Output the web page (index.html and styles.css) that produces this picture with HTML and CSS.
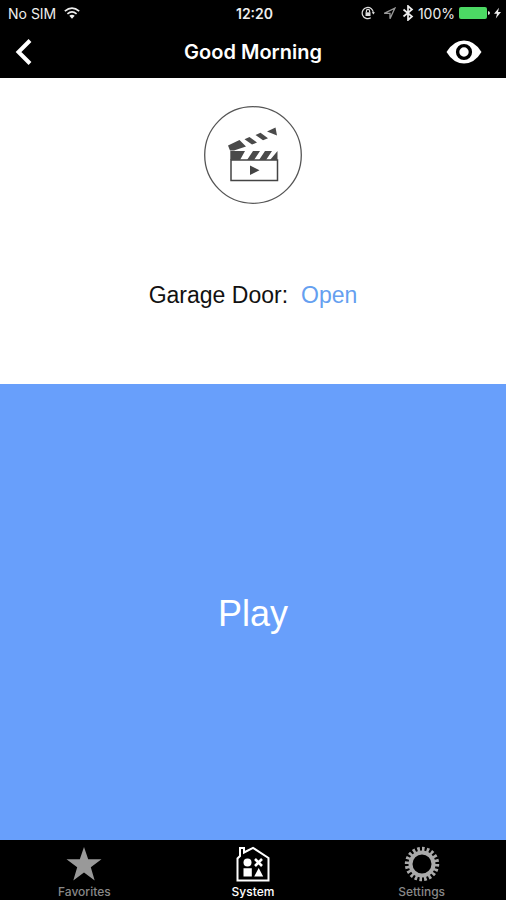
FILE: index.html
```html
<!DOCTYPE html>
<html lang="en">
<head>
<meta charset="utf-8">
<meta name="viewport" content="width=device-width, initial-scale=1">
<title>Good Morning</title>
<link rel="stylesheet" href="styles.css">
</head>
<body>
<div class="status">
  <div class="status-side">
    <span>No SIM</span>
    <svg class="wifi" width="16" height="12" viewBox="0 0 16 12" fill="none" stroke="#eee" stroke-width="1.7" aria-hidden="true">
      <path d="M.8 4.1Q8-2 15.2 4.1M3.4 6.8q4.6-3.8 9.2 0"/>
      <path d="M5.3 8.8Q8 6.8 10.7 8.8L8 11.8z" fill="#eee" stroke="none"/>
    </svg>
  </div>
  <span class="clock">12:20</span>
  <div class="status-side status-end">
    <svg width="14" height="14" viewBox="0 0 14 14" fill="none" stroke="#ddd" stroke-width="1.2" aria-hidden="true">
      <path d="M9.8 11.8A5.6 5.6 0 1 1 12.4 7"/>
      <path d="M10.8 6.2h3.2l-1.6 2.2z" fill="#ddd" stroke="none"/>
      <path d="M5.4 6.5V5a1.6 1.6 0 0 1 3.2 0v1.5"/>
      <path d="M4.5 6.3h5V10h-5z" fill="#ddd" stroke="none"/>
    </svg>
    <svg class="location" width="13" height="13" viewBox="0 0 13 13" fill="none" stroke="#999" stroke-width="1.3" aria-hidden="true">
      <path d="M1.2 6.4 11.8 1.2 7 11.8V6.4z"/>
    </svg>
    <svg width="12" height="16" viewBox="0 0 12 16" fill="none" stroke="#eee" stroke-width="1.7" aria-hidden="true">
      <path d="M1.5 4.5 10 11.5 6 15V1l4 3.5-8.5 7"/>
    </svg>
    <span>100%</span>
    <svg width="31" height="12" viewBox="0 0 31 12" aria-hidden="true">
      <rect width="28" height="12" rx="2" fill="#4cd964"/>
      <path d="M29 4q2 .4 2 2t-2 2z" fill="#ddd"/>
    </svg>
    <svg width="7" height="12" viewBox="0 0 7 12" fill="#eee" aria-hidden="true">
      <path d="M5 .8 0 6.8h3L1.8 11.4 7 5H4z"/>
    </svg>
  </div>
</div>
<header class="nav">
  <button class="icon-button" aria-label="Back">
    <svg width="20" height="28" viewBox="0 0 20 28" fill="none" stroke="#fff" stroke-width="4" aria-hidden="true">
      <path d="M16 2.5 4.5 14 16 25.5"/>
    </svg>
  </button>
  <h1 class="title">Good Morning</h1>
  <button class="icon-button" aria-label="View">
    <svg width="36" height="24" viewBox="0 0 36 24" aria-hidden="true">
      <path d="M.5 12Q7.5.5 18 .5T35.5 12Q28.5 23.5 18 23.5T.5 12z" fill="#fff"/>
      <circle cx="18" cy="12" r="6.4" fill="#fff" stroke="#000" stroke-width="3.4"/>
    </svg>
  </button>
</header>
<main class="scene">
  <section class="details">
    <svg width="98" height="98" viewBox="0 0 98 98" aria-hidden="true">
      <circle cx="49" cy="49" r="48.3" fill="none" stroke="#555" stroke-width="1.3"/>
      <path d="M27 54V74.5H73.5V54z" fill="none" stroke="#444" stroke-width="1.5"/>
      <path d="M46 59.5v9.5l9.5-4.7z" fill="#444"/>
      <g fill="#4a4a4a">
        <path d="M26.3 45H41L36 54H26.3zM49 45h7l-6 9h-7zM61 45h7l-6 9h-7zM73.5 45v9H66z"/>
        <path d="M24 39.5 35.5 34 42 40.5 30 44.5H26zM40.5 33.2 45.5 31 53 36.5 48 38.5zM51.5 29 56.5 26.8 64 32.2 59 34.3zM63 25.5 71.5 21.5 73 29.5z"/>
      </g>
    </svg>
    <p class="device"><span>Garage Door:</span><span class="value">Open</span></p>
  </section>
  <button class="play">Play</button>
</main>
<nav class="tabs">
  <a class="tab" href="#favorites">
    <svg width="36" height="36" viewBox="0 0 36 36" fill="#999" aria-hidden="true">
      <path d="M18 1 22.2 13.3H35.5L24.8 21.2 28.7 34.5 18 26.5 7.3 34.5 11.2 21.2.5 13.3H13.8z"/>
    </svg>
    <span>Favorites</span>
  </a>
  <a class="tab tab-active" href="#system" aria-current="page">
    <svg width="36" height="36" viewBox="0 0 36 36" fill="#fff" aria-hidden="true">
      <path d="M2.5 34.5V12.5L5 10V2H9V6.5L18 1.8 33.5 12V34.5z" fill="none" stroke="#fff" stroke-width="2"/>
      <circle cx="12.5" cy="16.5" r="4"/>
      <path d="M20 13l7 7M27 13l-7 7" stroke="#fff" stroke-width="2.6"/>
      <path d="M8.5 22.3H16.8V30.6H8.5zM23.7 22 28.2 30.6H19.2z"/>
    </svg>
    <span>System</span>
  </a>
  <a class="tab" href="#settings">
    <svg width="36" height="36" viewBox="0 0 36 36" fill="none" stroke="#aaa" aria-hidden="true">
      <circle cx="18" cy="18" r="11.5" stroke-width="4"/>
      <circle cx="18" cy="18" r="15" stroke-width="4.4" pathLength="40" stroke-dasharray="1.1 .9"/>
    </svg>
    <span>Settings</span>
  </a>
</nav>
</body>
</html>
```
FILE: styles.css
```css
* {
  box-sizing: border-box;
}

body {
  display: flex;
  flex-direction: column;
  min-height: 100vh;
  margin: 0;
  background: #fff;
  color: #111;
  font-family: "Liberation Sans", Arial, sans-serif;
}

button {
  border: 0;
  padding: 0;
  background: none;
  font: inherit;
  cursor: pointer;
}

.status {
  display: flex;
  align-items: center;
  height: 26px;
  padding: 0 5px 0 8px;
  background: #000;
  color: #eee;
  font-family: Inter, sans-serif;
  font-size: 14px;
}

.status-side {
  display: flex;
  flex: 1;
  align-items: center;
  gap: 4px;
}

.status-end {
  justify-content: flex-end;
}

.clock {
  font-weight: 600;
}

.wifi {
  margin-left: 4px;
}

.location {
  margin: 0 2px 0 4px;
}

.nav {
  display: grid;
  grid-template-columns: 1fr auto 1fr;
  align-items: center;
  height: 52px;
  padding: 0 14px;
  background: #000;
  color: #fff;
}

.icon-button {
  display: flex;
}

.icon-button:last-child {
  justify-content: flex-end;
  padding-right: 10px;
}

.title {
  margin: 0;
  font: 600 20px Inter, sans-serif;
}

.scene {
  display: flex;
  flex: 1;
  flex-direction: column;
}

.details {
  display: flex;
  flex-direction: column;
  align-items: center;
  gap: 76px;
  padding: 28px 16px 74px;
}

.device {
  display: flex;
  gap: 13px;
  margin: 0;
  font-size: 23px;
  line-height: 30px;
}

.value {
  color: #659ff0;
}

.play {
  flex: 1;
  padding-top: 4px;
  background: #689ffb;
  color: #fff;
  font-size: 36px;
}

.tabs {
  display: flex;
  height: 60px;
  background: #000;
}

.tab {
  display: flex;
  flex: 1;
  flex-direction: column;
  align-items: center;
  gap: 3px;
  padding-top: 6px;
  color: #888;
  font: 500 12px/14px Inter, sans-serif;
  text-decoration: none;
}

.tab-active {
  color: #fff;
}
```
